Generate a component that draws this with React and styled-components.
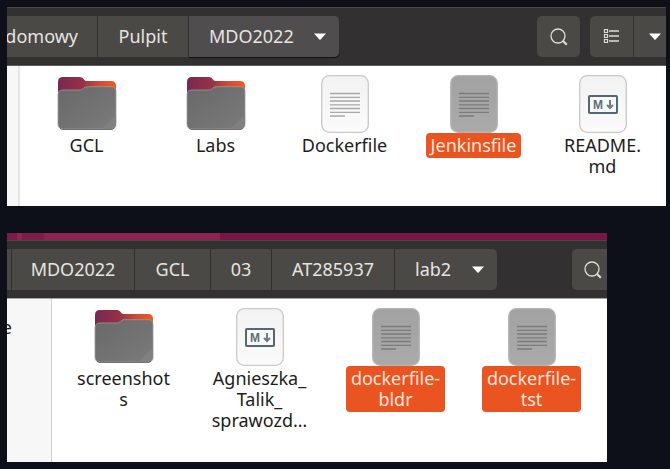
import React, { useId } from "react";
import styled, { createGlobalStyle, css } from "styled-components";

const GlobalStyle = createGlobalStyle`
  *, *::before, *::after { box-sizing: border-box; }
  html { background: #0d1018; }
  body {
    margin: 0;
    font-family: "Noto Sans", "Open Sans", sans-serif;
    font-size: 18px;
    line-height: 21px;
    color: #1c1c1c;
  }
  button { font: inherit; color: inherit; border: 0; margin: 0; padding: 0; background: none; }
`;

const Page = styled.main`
  display: flex;
  flex-direction: column;
  gap: 27px;
  padding: 7px 4px 7px 7px;
`;

const Window = styled.section`
  margin-right: ${(p) => p.$inset || 0}px;
  overflow: hidden;
  background: #fff;
`;

const Wallpaper = styled.div`
  height: 7px;
  background: linear-gradient(90deg, #7b1b49 0 10px, #8c2550 10px 15px, #7e1c4a 15px 37px, #8c2350 37px 213px, #761746 213px);
`;

const HeaderBar = styled.header`
  display: flex;
  align-items: center;
  justify-content: space-between;
  height: 59px;
  border-top: 1px solid #484645;
  border-bottom: 1px solid ${(p) => (p.$focused ? "#5c5a5a" : "#aaa8a7")};
  background: #323031;
`;

const Path = styled.nav`
  display: flex;
  flex: none;
`;

const Crumb = styled.button`
  display: flex;
  align-items: center;
  justify-content: center;
  flex: none;
  width: ${(p) => p.$width}px;
  height: 41px;
  overflow: hidden;
  border-right: 1px solid #302e2e;
  background: #4a4946;
  color: #e6e4e1;
  white-space: nowrap;
  ${(p) => p.$clipped && css`
    justify-content: flex-end;
    padding-right: 19px;
  `}
  ${(p) => p.$last && css`
    justify-content: space-between;
    padding: 0 13px 0 20px;
    border-radius: 0 5px 5px 0;
  `}
  ${(p) => p.$active && css`
    background: #4f4d4e;
    box-shadow: 0 1px 0 #111;
  `}
`;

const CrumbEdge = styled.span`
  width: 5px;
  height: 41px;
  border-right: 1px solid #302e2e;
  background: #4a4946;
`;

const Tools = styled.div`
  display: flex;
  flex: none;
  gap: 10px;
`;

const ToolGroup = styled.div`
  display: flex;
  gap: 1px;
`;

const ToolButton = styled.button`
  display: flex;
  align-items: center;
  justify-content: ${(p) => (p.$cut ? "flex-start" : "center")};
  width: ${(p) => p.$width || 43}px;
  height: 41px;
  padding-left: ${(p) => p.$cut || 0}px;
  border-radius: ${(p) => p.$corners || "5px"};
  background: #4a4946;
  color: #dedcd9;
  svg { flex: none; }
`;

const Body = styled.div`
  display: flex;
`;

const Sidebar = styled.aside`
  flex: none;
  width: ${(p) => p.$width}px;
  padding-top: 18px;
  overflow: hidden;
  border-right: ${(p) => p.$rule}px solid ${(p) => (p.$rule > 1 ? "#e6e6e6" : "#d0d0d0")};
  background: #f7f7f7;
`;

const Place = styled.span`
  display: flex;
  justify-content: flex-end;
  width: 5px;
`;

const Files = styled.ul`
  display: flex;
  gap: ${(p) => p.$gap}px;
  margin: 0;
  padding: ${(p) => p.$padding};
  list-style: none;
`;

const File = styled.button`
  display: flex;
  flex-direction: column;
  align-items: center;
  width: 123px;
  svg { display: block; }
`;

const Label = styled.span`
  padding: 2px 5px;
  border-radius: 4px;
  white-space: nowrap;
  ${(p) => p.$selected && css`
    background: #e95420;
    color: #fbe5dc;
  `}
`;

const Line = styled.span`
  display: block;
`;

function Arrow() {
  return (
    <svg width="12" height="7" viewBox="0 0 12 7" aria-hidden="true">
      <path d="M0 .4h12L6.600 6.400q-.6.500-1.200 0z" fill="#fff" />
    </svg>
  );
}

function SearchIcon() {
  return (
    <svg width="18" height="18" viewBox="0 0 18 18" fill="none" stroke="currentColor" aria-hidden="true">
      <circle cx="8" cy="8" r="7" strokeWidth="1.3" />
      <path d="M12.8 12.8l4 4" strokeWidth="2.2" />
    </svg>
  );
}

function ListIcon() {
  return (
    <svg width="17" height="17" viewBox="0 0 17 17" fill="none" stroke="currentColor" aria-hidden="true">
      <path d="M1.500 1.500h3v3h-3zM1.500 6.500h3v3h-3zM1.500 11.500h3v3h-3z" strokeWidth="1.200" />
      <path d="M6 3h10M6 8h10M6 13h10" strokeWidth="1.500" />
    </svg>
  );
}

function FolderIcon() {
  const id = useId();
  return (
    <svg width="60" height="58" viewBox="0 0 60 58" aria-hidden="true">
      <defs>
        <linearGradient id={`${id}b`} x1="0" y1="0" x2="1" y2="0">
          <stop offset="0" stopColor="#772953" />
          <stop offset=".42" stopColor="#963147" />
          <stop offset=".7" stopColor="#cd4b37" />
          <stop offset="1" stopColor="#f05a25" />
        </linearGradient>
        <linearGradient id={`${id}f`} x1="0" y1="0" x2="1" y2="1">
          <stop offset="0" stopColor="#686868" />
          <stop offset="1" stopColor="#7b7b7b" />
        </linearGradient>
      </defs>
      <path d="M1 20V7q0-5 5-5h17q3 0 4 2.500q1 1.500 3 1.500h24q5 0 5 5v12z" fill={`url(#${id}b)`} />
      <path d="M1 20q0-5 5-5h17q2 0 3.500-1.600t3.500-1.700h24q5 0 5 5V49q0 5-5 5H6q-5 0-5-5z" fill={`url(#${id}f)`} stroke="#999" strokeWidth=".8" />
      <path d="M45 53.500L58.500 40V49q0 4.500-4.500 4.500z" fill="#808080" />
      <path d="M3 53.200q1 1.300 3 1.300h48q2 0 3-1.300" fill="none" stroke="#565656" strokeWidth=".8" />
    </svg>
  );
}

function Sheet({ selected, children }) {
  const id = useId();
  return (
    <svg width="48" height="58" viewBox="0 0 48 58" aria-hidden="true">
      <defs>
        <linearGradient id={id} x1="0" y1="0" x2="0" y2="1">
          <stop offset="0" stopColor={selected ? "#a2a2a2" : "#f2f2f2"} />
          <stop offset="1" stopColor={selected ? "#aaaaaa" : "#fbfbfb"} />
        </linearGradient>
      </defs>
      <rect x=".7" y=".7" width="46.600" height="56.600" rx="7.500" fill={`url(#${id})`} stroke={selected ? "#b5b5b5" : "#c9c9c9"} strokeWidth="1.300" />
      {children}
    </svg>
  );
}

function TextIcon({ selected }) {
  return (
    <Sheet selected={selected}>
      <path
        d="M9 18.500h30M9 22.300h30M9 26h30M9 29.800h30M9 33.500h30M9 37.300h30M9 41h15"
        stroke={selected ? "#7b7b7b" : "#a8a8a8"}
        strokeWidth="1.300"
      />
    </Sheet>
  );
}

const MarkText = styled.text`
  font-family: "Liberation Sans", sans-serif;
  font-size: 12px;
  font-weight: 700;
  fill: #5d6e78;
`;

function MarkdownIcon() {
  return (
    <Sheet>
      <rect x="10" y="21" width="28" height="17" rx=".8" fill="#f8f8f8" stroke="#536872" strokeWidth="2" />
      <MarkText x="14" y="34">M</MarkText>
      <path d="M31 25v8M28 30l3 3 3-3" fill="none" stroke="#6e7e87" strokeWidth="2" />
    </Sheet>
  );
}

const icons = { folder: FolderIcon, text: TextIcon, markdown: MarkdownIcon };

function FileList({ files, gap, padding }) {
  return (
    <Files $gap={gap} $padding={padding}>
      {files.map(({ lines, kind, selected }) => {
        const Icon = icons[kind];
        return (
          <li key={lines.join("")}>
            <File type="button" aria-pressed={!!selected}>
              <Icon selected={selected} />
              <Label $selected={selected}>
                {lines.map((line) => <Line key={line}>{line}</Line>)}
              </Label>
            </File>
          </li>
        );
      })}
    </Files>
  );
}

const projectFiles = [
  { kind: "folder", lines: ["GCL"] },
  { kind: "folder", lines: ["Labs"] },
  { kind: "text", lines: ["Dockerfile"] },
  { kind: "text", lines: ["Jenkinsfile"], selected: true },
  { kind: "markdown", lines: ["README.", "md"] },
];

const labFiles = [
  { kind: "folder", lines: ["screenshot", "s"] },
  { kind: "markdown", lines: ["Agnieszka_", "Talik_", "sprawozd…"] },
  { kind: "text", lines: ["dockerfile-", "bldr"], selected: true },
  { kind: "text", lines: ["dockerfile-", "tst"], selected: true },
];

export default function App() {
  return (
    <>
      <GlobalStyle />
      <Page>
        <Window>
          <HeaderBar $focused>
            <Path aria-label="MDO2022">
              <Crumb type="button" $width={91} $clipped>domowy</Crumb>
              <Crumb type="button" $width={91}>Pulpit</Crumb>
              <Crumb type="button" $width={151} $active $last>MDO2022<Arrow /></Crumb>
            </Path>
            <Tools>
              <ToolButton type="button" aria-label="Search"><SearchIcon /></ToolButton>
              <ToolGroup>
                <ToolButton type="button" aria-label="List view" $corners="5px 0 0 5px"><ListIcon /></ToolButton>
                <ToolButton type="button" aria-label="View options" $corners="0" $width={32} $cut={15}><Arrow /></ToolButton>
              </ToolGroup>
            </Tools>
          </HeaderBar>
          <Body>
            <Sidebar $width={13} $rule={2} />
            <FileList files={projectFiles} gap={6} padding="9px 0 27px 5px" />
          </Body>
        </Window>
        <Window $inset={59}>
          <Wallpaper />
          <HeaderBar>
            <Path aria-label="lab2">
              <CrumbEdge />
              <Crumb type="button" $width={123}>MDO2022</Crumb>
              <Crumb type="button" $width={76}>GCL</Crumb>
              <Crumb type="button" $width={61}>03</Crumb>
              <Crumb type="button" $width={123}>AT285937</Crumb>
              <Crumb type="button" $width={103} $last>lab2<Arrow /></Crumb>
            </Path>
            <Tools>
              <ToolButton type="button" aria-label="Search" $corners="5px 0 0 5px" $width={35} $cut={12}><SearchIcon /></ToolButton>
            </Tools>
          </HeaderBar>
          <Body>
            <Sidebar $width={45} $rule={1}><Place>e</Place></Sidebar>
            <FileList files={labFiles} gap={13} padding="9px 0 29px 10px" />
          </Body>
        </Window>
      </Page>
    </>
  );
}
